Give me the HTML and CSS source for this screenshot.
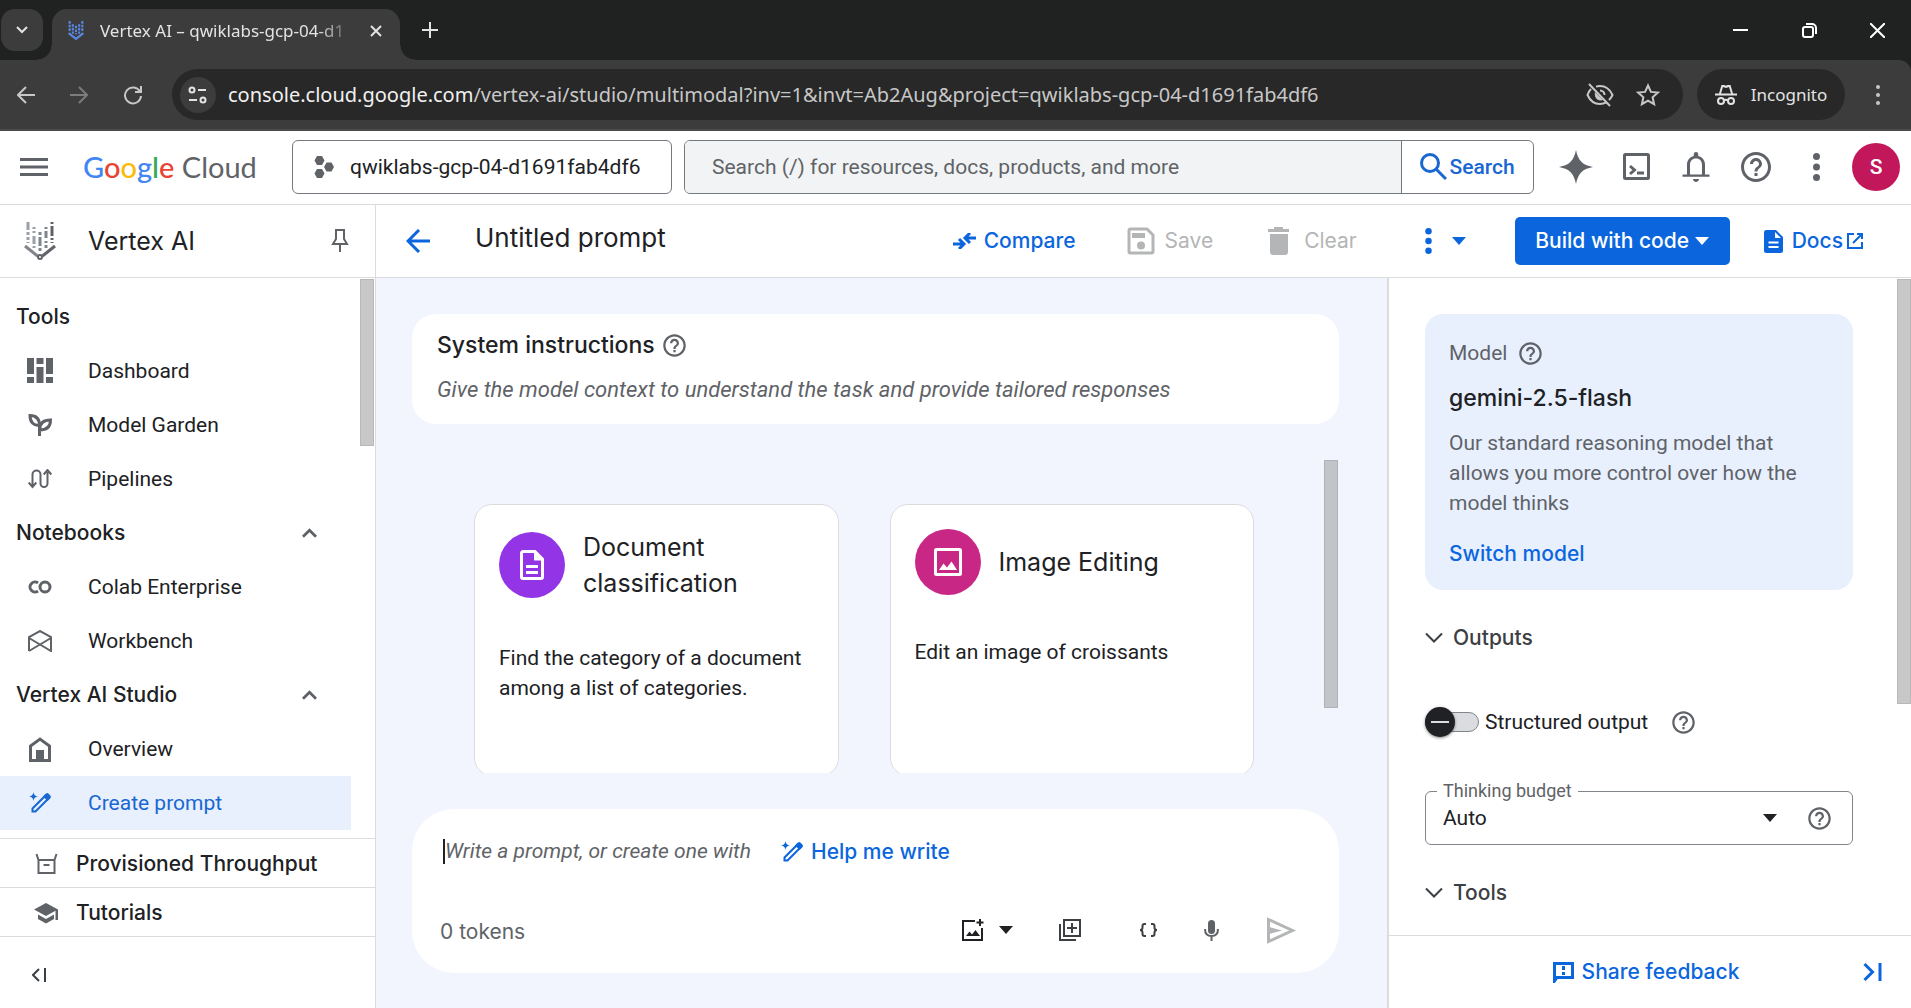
FILE: index.html
```html
<!DOCTYPE html>
<html lang="en">
<head>
<meta charset="utf-8">
<meta name="viewport" content="width=device-width, initial-scale=1">
<title>Vertex AI – qwiklabs-gcp-04-d1691fab4df6</title>
<link rel="stylesheet" href="styles.css">
</head>
<body>
<svg class="sprite" aria-hidden="true">
  <symbol id="i-help" viewBox="0 0 24 24"><path d="M11 18h2v-2h-2v2zm1-16C6.480 2 2 6.480 2 12s4.480 10 10 10 10-4.480 10-10S17.520 2 12 2zm0 18c-4.410 0-8-3.590-8-8s3.590-8 8-8 8 3.590 8 8-3.590 8-8 8zm0-14c-2.210 0-4 1.790-4 4h2c0-1.100.9-2 2-2s2 .9 2 2c0 2-3 1.750-3 5h2c0-2.250 3-2.500 3-5 0-2.210-1.790-4-4-4z"/></symbol>
  <symbol id="i-caret" viewBox="0 0 14 8"><path d="M0 0h14L7 8z"/></symbol>
  <symbol id="i-dots" viewBox="0 0 8 32"><circle cx="4" cy="4" r="4"/><circle cx="4" cy="16" r="4"/><circle cx="4" cy="28" r="4"/></symbol>
  <symbol id="i-wand" viewBox="0 0 22 22"><path d="M4.500 0c.5 2.800 1.300 3.800 4.500 4.500-3.200.7-4 1.700-4.500 4.500C4 6.200 3.200 5.200 0 4.500 3.200 3.800 4 2.800 4.500 0z"/><path fill="none" stroke="currentColor" stroke-width="2" d="M3.500 19.500v-3L16.500 3.500l3 3-13 13z"/><path d="M14 4.500L16.800 1.700a2 2 0 0 1 2.800 0l1.700 1.700a2 2 0 0 1 0 2.800L18.500 9z"/></symbol>
  <symbol id="i-up" viewBox="0 0 16 10"><path fill="none" stroke="currentColor" stroke-width="3" d="M1 9l7-7 7 7"/></symbol>
  <symbol id="i-down" viewBox="0 0 18 12"><path fill="none" stroke="currentColor" stroke-width="2" d="M1 1.500l8 8 8-8"/></symbol>
</svg>

<header class="browser">
  <div class="tabstrip">
    <button class="tab-search" aria-label="Search tabs"><svg width="12" height="8" viewBox="0 0 12 8"><path class="line" stroke-width="2" d="M1 1l5 5 5-5"/></svg></button>
    <div class="tab">
      <svg class="tab-icon" width="18" height="20" viewBox="0 0 32 38" fill="#5b86e0" stroke="#5b86e0"><path fill="none" stroke-width="4" d="M2 23l14 11 14-11"/><path fill="none" stroke-width="4" stroke-dasharray="5 2" d="M4 0v20M10 6v18M16 9v16M22 6v18M28 0v20"/></svg>
      <span class="tab-title">Vertex AI – qwiklabs-gcp-04-d1</span>
      <button class="tab-close" aria-label="Close tab"><svg width="12" height="12" viewBox="0 0 12 12"><path class="line" stroke-width="2" d="M1 1l10 10M11 1L1 11"/></svg></button>
    </div>
    <button class="tab-new" aria-label="New tab"><svg width="16" height="16" viewBox="0 0 16 16"><path class="line" stroke-width="2" d="M8 0v16M0 8h16"/></svg></button>
    <div class="window-buttons">
      <button aria-label="Minimize"><svg width="15" height="15" viewBox="0 0 15 15"><path class="line" stroke-width="2" d="M0 7h15"/></svg></button>
      <button aria-label="Restore"><svg width="15" height="15" viewBox="0 0 15 15"><path class="line" stroke-width="2" d="M4 1h6a4 4 0 0 1 4 4v6"/><rect class="line" stroke-width="2" x="1" y="4" width="10" height="10" rx="2"/></svg></button>
      <button aria-label="Close"><svg width="15" height="15" viewBox="0 0 15 15"><path class="line" stroke-width="2" d="M0 0l15 15M15 0L0 15"/></svg></button>
    </div>
  </div>
  <div class="toolbar">
    <button class="nav" aria-label="Back"><svg width="18" height="18" viewBox="0 0 18 18"><path class="line" stroke-width="2" d="M18 9H2M9 1L1 9l8 8"/></svg></button>
    <button class="nav nav-off" aria-label="Forward"><svg width="18" height="18" viewBox="0 0 18 18"><path class="line" stroke-width="2" d="M0 9h16M9 1l8 8-8 8"/></svg></button>
    <button class="nav" aria-label="Reload"><svg width="20" height="20" viewBox="0 0 20 20"><path class="line" stroke-width="2" d="M17 6.500A8 8 0 1 0 18 11M18 1v6h-6"/></svg></button>
    <div class="omnibox">
      <button class="site-info" aria-label="Site information"><svg width="20" height="20" viewBox="0 0 20 20"><g class="line" stroke-width="2"><circle cx="4" cy="5" r="2.500"/><path d="M10 5h8"/><circle cx="15" cy="15" r="2.500"/><path d="M1 15h8"/></g></svg></button>
      <span class="url"><b>console.cloud.google.com</b>/vertex-ai/studio/multimodal?inv=1&amp;invt=Ab2Aug&amp;project=qwiklabs-gcp-04-d1691fab4df6</span>
      <button class="omni-btn" aria-label="Third-party cookies blocked"><svg width="28" height="26" viewBox="0 0 28 26"><g class="line" stroke-width="2"><path d="M5 7C3 9 2 11 1.500 13 4 18.500 8.500 22 14 22c2.500 0 4.500-.6 6.500-1.600M10 4.600c1.200-.4 2.600-.6 4-.6 5.500 0 10 3.500 12.500 9-.8 1.800-2 3.500-3.500 5M3 2l21 22"/><path d="M14 8.500a4.500 4.500 0 0 1 4.500 4.500"/></g><path fill="currentColor" d="M9 10l8 8c-6 2-9-3-8-8z"/></svg></button>
      <button class="omni-btn" aria-label="Bookmark"><svg width="24" height="24" viewBox="0 0 24 24"><path class="line" stroke-width="2" d="M12 2.500l2.900 6.400 7 .7-5.300 4.700 1.500 6.900-6.100-3.600-6.100 3.600 1.500-6.900L2.100 9.600l7-.7z"/></svg></button>
    </div>
    <button class="incognito"><svg width="22" height="20" viewBox="0 0 22 20"><path fill="currentColor" d="M6.500 0h3l1.500.8L12.500 0h3L18 8.500h4v2H0v-2h4zM8 2L6 8.500h10L14 2l-3 1z"/><g class="line" stroke-width="2"><circle cx="6" cy="16" r="3"/><circle cx="16" cy="16" r="3"/><path d="M9 15.500c1.300-1 2.700-1 4 0"/></g></svg>Incognito</button>
    <button class="browser-menu" aria-label="Browser menu"><svg width="6" height="22" viewBox="0 0 6 22" fill="currentColor"><circle cx="3" cy="3" r="2"/><circle cx="3" cy="11" r="2"/><circle cx="3" cy="19" r="2"/></svg></button>
  </div>
</header>

<header class="cloud-bar">
  <button class="hamburger" aria-label="Navigation menu"><svg width="28" height="18" viewBox="0 0 28 18"><path fill="currentColor" d="M0 0h28v3H0zM0 7.500h28v3H0zM0 15h28v3H0z"/></svg></button>
  <a class="logo" href="#"><span class="g-blue">G</span><span class="g-red">o</span><span class="g-yellow">o</span><span class="g-blue">g</span><span class="g-green">l</span><span class="g-red">e</span> Cloud</a>
  <button class="project"><svg width="20" height="22" viewBox="0 0 20 22" fill="#5f6368"><path d="M3 0h5l2.500 4.500L8 9H3L.5 4.500zM3 13h5l2.500 4.500L8 22H3L.5 17.500zM12.500 6.500h5L20 11l-2.500 4.500h-5L10 11z"/></svg>qwiklabs-gcp-04-d1691fab4df6</button>
  <form class="search">
    <input type="text" aria-label="Search" placeholder="Search (/) for resources, docs, products, and more">
    <button type="button"><svg width="27" height="27" viewBox="0 0 27 27" fill="none" stroke="currentColor" stroke-width="3"><circle cx="10" cy="10" r="8.500"/><path d="M16 16l10 10"/></svg>Search</button>
  </form>
  <div class="cloud-actions">
    <button aria-label="Gemini"><svg width="34" height="34" viewBox="0 0 34 34" fill="currentColor"><path d="M17 0c2 10 6 15 17 17-11 2-15 7-17 17C15 24 11 19 0 17 11 15 15 10 17 0z"/></svg></button>
    <button aria-label="Cloud Shell"><svg width="27" height="27" viewBox="0 0 27 27"><rect class="line" stroke-width="3" x="1.500" y="1.500" width="24" height="24" rx="1"/><path class="line" stroke-width="3" d="M7 13l4.500 4L7 21M14 20h7"/></svg></button>
    <button aria-label="Notifications"><svg width="36" height="36" viewBox="0 0 24 24" fill="currentColor"><path d="M12 22c1.100 0 2-.9 2-2h-4c0 1.100.9 2 2 2zm6-5v-6.500c0-3-1.900-5.200-4.500-5.800V3.500a1.500 1.500 0 0 0-3 0v1.200C7.900 5.300 6 7.500 6 10.500V17H3v1.500h18V17h-3zm-2 0H8v-6.500c0-2.500 1.500-4.200 4-4.200s4 1.700 4 4.200V17z"/></svg></button>
    <button aria-label="Help"><svg class="icon" width="36" height="36"><use href="#i-help"/></svg></button>
    <button aria-label="More options"><svg class="icon" width="7" height="28"><use href="#i-dots"/></svg></button>
    <button class="avatar" aria-label="Account"><span>S</span></button>
  </div>
</header>

<div class="app">
  <aside class="sidebar">
    <div class="product">
      <svg width="32" height="38" viewBox="0 0 32 38" fill="none"><g stroke="#80868b" stroke-width="3"><path d="M1 24l12.500 10"/><path stroke="#5f6368" d="M31 24L18.500 34"/><circle cx="16" cy="35" r="2" stroke="#5f6368" stroke-width="2"/><path stroke="#9aa0a6" stroke-dasharray="8 2 3 2 3 2" d="M4 0v21"/><path stroke="#9aa0a6" stroke-dasharray="2 2 2 3 8 2" d="M10 5v21"/><path stroke="#80868b" stroke-dasharray="3 2 9 2" d="M16 10v20"/><path stroke-dasharray="2 2 7 3" d="M22 5v21"/><path stroke="#5f6368" stroke-dasharray="2 2 10 2" d="M28 0v21"/></g></svg>
      <h1>Vertex AI</h1>
      <button class="pin" aria-label="Pin navigation"><svg width="18" height="24" viewBox="0 0 18 24"><path class="line" stroke-width="2" d="M4 1h10M5 1v9l-3 5h14l-3-5V1M9 15v8"/></svg></button>
    </div>
    <nav class="menu">
      <h2>Tools</h2>
      <a href="#"><svg width="26" height="26" viewBox="0 0 26 26" fill="currentColor"><path d="M0 0h7v16H0zM0 19h7v6H0zM9.500 0h7v6h-7zM9.500 9h7v16h-7zM19 0h7v16h-7zM19 19h7v6h-7z"/></svg>Dashboard</a>
      <a href="#"><svg width="24" height="24" viewBox="0 0 24 24" fill="none" stroke="currentColor" stroke-width="3"><path d="M11.500 23V12.500M11.500 12.500C6 13 2 9.500 2 2.500c6 0 9.500 3.500 9.500 10zM11.500 17c0-6.500 4-10 11-10 0 7-4.500 10-11 10z"/></svg>Model Garden</a>
      <a href="#"><svg width="24" height="20" viewBox="0 0 24 20" fill="none" stroke="currentColor" stroke-width="2"><path d="M4.500 17V5.500a4 4 0 0 1 8 0v9a3.500 3.500 0 0 0 7 0V3M.7 13.500l3.800 4.500 3.800-4.500M15.700 5.500L19.500 1l3.800 4.500"/></svg>Pipelines</a>
      <h2>Notebooks<svg class="icon" width="15" height="10"><use href="#i-up"/></svg></h2>
      <a href="#"><svg width="24" height="14" viewBox="0 0 24 14" fill="none" stroke="currentColor" stroke-width="3"><path d="M10 3a5 5 0 1 0 0 8"/><circle cx="17" cy="7" r="5"/></svg>Colab Enterprise</a>
      <a href="#"><svg width="24" height="22" viewBox="0 0 24 22" fill="none" stroke="currentColor" stroke-width="2"><path d="M1 21V7l11-6 11 6v14L1 8M1 21L23 8"/></svg>Workbench</a>
      <h2>Vertex AI Studio<svg class="icon" width="15" height="10"><use href="#i-up"/></svg></h2>
      <a href="#"><svg width="22" height="25" viewBox="0 0 22 25" fill="none" stroke="currentColor" stroke-width="3"><path d="M1.500 23.500V9L11 2l9.500 7v14.500z"/><path fill="currentColor" stroke="none" d="M7 13h8v11H7z"/></svg>Overview</a>
      <a class="current" href="#" aria-current="page"><svg class="icon" width="22" height="22"><use href="#i-wand"/></svg>Create prompt</a>
      <div class="thumb thumb-menu"></div>
    </nav>
    <div class="pinned">
      <a href="#"><svg width="22" height="22" viewBox="0 0 22 22" fill="none" stroke="currentColor" stroke-width="2"><path d="M1 1l2 6h16l2-6M3 7v13h16V7M8 12h6"/></svg>Provisioned Throughput</a>
      <a href="#"><svg width="25" height="21" viewBox="0 0 25 21" fill="currentColor"><path d="M12 0L0 6.500 12 13l9.500-5.200V17H24V6.500zM4 11.500v4.500l8 4.500 8-4.500v-4.500L12 16z"/></svg>Tutorials</a>
    </div>
    <button class="collapse" aria-label="Collapse menu"><svg width="15" height="14" viewBox="0 0 15 14"><path class="line" stroke-width="2" d="M7 1L1 7l6 6M13 0v14"/></svg></button>
  </aside>

  <main class="studio">
    <div class="actions">
      <button class="back" aria-label="Back"><svg width="24" height="24" viewBox="0 0 24 24"><path class="line" stroke-width="3" d="M24 12H3M13 1L2 12l11 11"/></svg></button>
      <h2>Untitled prompt</h2>
      <button class="act act-compare"><svg width="23" height="16" viewBox="0 0 23 16"><path class="line" stroke-width="3" d="M0 11h10M6 6l5 5-5 5M23 5H12M17 0l-5 5 5 5"/></svg>Compare</button>
      <button class="act act-save" disabled><svg width="28" height="28" viewBox="0 0 28 28"><path class="line" stroke-width="3" d="M3.500 2H20l6 6v16.500a1.500 1.500 0 0 1-1.500 1.500h-21A1.500 1.500 0 0 1 2 24.500v-21A1.500 1.500 0 0 1 3.500 2z"/><path fill="currentColor" d="M5 6h13v5H5z"/><circle cx="14" cy="18.500" r="4" fill="currentColor"/></svg>Save</button>
      <button class="act act-clear" disabled><svg width="22" height="28" viewBox="0 0 22 28" fill="currentColor"><path d="M6 0h9v2h6v3H0V2h6zM2 7h18v18a3 3 0 0 1-3 3H5a3 3 0 0 1-3-3z"/></svg>Clear</button>
      <button class="act act-more" aria-label="More actions"><svg class="icon" width="7" height="26"><use href="#i-dots"/></svg><svg class="icon" width="14" height="8"><use href="#i-caret"/></svg></button>
      <button class="primary">Build with code<svg class="icon" width="14" height="8"><use href="#i-caret"/></svg></button>
      <a class="docs" href="#"><svg width="19" height="23" viewBox="0 0 19 23"><path fill="currentColor" d="M2.500 0H12l7 7v13.500a2.500 2.500 0 0 1-2.500 2.500h-14A2.500 2.500 0 0 1 0 20.500v-18A2.500 2.500 0 0 1 2.500 0z"/><path fill="#fff" d="M11 2v6h6zM4.500 11.500h10v2h-10zM4.500 16h10v2h-10z"/></svg>Docs<svg width="16" height="16" viewBox="0 0 16 16"><path class="line" stroke-width="2" d="M7 1H1v14h14V9M10 1h5v5M15 1L6 10"/></svg></a>
    </div>

    <div class="workspace">
      <section class="compose">
        <div class="system">
          <h3>System instructions<svg class="icon" width="27" height="27"><use href="#i-help"/></svg></h3>
          <input type="text" aria-label="System instructions" placeholder="Give the model context to understand the task and provide tailored responses">
        </div>
        <div class="samples">
          <article class="sample">
            <header><span class="badge purple"><svg width="24" height="30" viewBox="0 0 24 30"><path class="line" stroke-width="3" d="M3 1.500h12l7.500 7.500v18a1.500 1.500 0 0 1-1.500 1.500H3A1.500 1.500 0 0 1 1.500 27V3A1.500 1.500 0 0 1 3 1.500z"/><path fill="currentColor" d="M14 2h2l7 7v1.500h-9zM6 15h12v3H6zM6 21h12v3H6z"/></svg></span><h3>Document classification</h3></header>
            <p>Find the category of a document among a list of categories.</p>
          </article>
          <article class="sample">
            <header><span class="badge pink"><svg width="28" height="28" viewBox="0 0 28 28"><rect class="line" stroke-width="3" x="1.500" y="1.500" width="25" height="25" rx="1"/><path fill="currentColor" d="M5 22l4.500-6.500 3.500 4 4.500-6L23 22z"/></svg></span><h3>Image Editing</h3></header>
            <p>Edit an image of croissants</p>
          </article>
          <div class="thumb thumb-samples"></div>
        </div>
        <div class="prompt">
          <div class="prompt-line">
            <span class="cursor"></span><input type="text" aria-label="Prompt" placeholder="Write a prompt, or create one with">
            <button class="act help-write"><svg class="icon" width="22" height="22"><use href="#i-wand"/></svg>Help me write</button>
          </div>
          <div class="prompt-tools">
            <span class="tokens">0 tokens</span>
            <button class="media" aria-label="Insert media"><svg width="22" height="22" viewBox="0 0 22 22"><path class="line" stroke-width="2" d="M13 2H1v19h19V9"/><path fill="currentColor" d="M4 17l3.500-4.500 2.500 3 3.500-4.500L18 17z"/><path class="line" stroke-width="2" d="M18 0v7M14.500 3.500h7"/></svg><svg class="icon" width="14" height="8"><use href="#i-caret"/></svg></button>
            <button aria-label="Prompt gallery"><svg width="22" height="22" viewBox="0 0 22 22"><path class="line" stroke-width="2" d="M5 1h16v16H5zM1 5v16h16M13 4v10M8 9h10"/></svg></button>
            <button aria-label="Add variable"><svg width="19" height="14" viewBox="0 0 19 14"><path class="line" stroke-width="2" d="M7 1H5.500Q3.500 1 3.500 3v1.500Q3.500 7 1 7q2.500 0 2.500 2.500V11q0 2 2 2H7M12 1h1.500q2 0 2 2v1.500Q15.500 7 18 7q-2.500 0-2.500 2.500V11q0 2-2 2H12"/></svg></button>
            <button class="mic" aria-label="Voice input"><svg width="15" height="21" viewBox="0 0 15 21"><rect x="4" y="0" width="7" height="14" rx="3.500" fill="currentColor"/><path class="line" stroke-width="2" d="M1 9q0 7 6.500 7T14 9M7.500 16v5"/></svg></button>
            <button class="send" disabled aria-label="Submit"><svg width="29" height="27" viewBox="0 0 29 27"><path class="line" stroke-width="3" d="M1.500 2.500v22l24-11z"/><path fill="currentColor" d="M2 10l13 3.500L2 17z"/></svg></button>
          </div>
        </div>
      </section>

      <aside class="settings">
        <div class="settings-body">
          <section class="model">
            <p class="model-label">Model<svg class="icon" width="27" height="27"><use href="#i-help"/></svg></p>
            <h3>gemini-2.5-flash</h3>
            <p>Our standard reasoning model that allows you more control over how the model thinks</p>
            <button>Switch model</button>
          </section>
          <button class="group"><svg class="icon" width="18" height="12"><use href="#i-down"/></svg>Outputs</button>
          <div class="switch-row">
            <input type="checkbox" role="switch" id="structured"><label for="structured">Structured output</label>
            <svg class="icon" width="27" height="27"><use href="#i-help"/></svg>
          </div>
          <div class="field">
            <label for="budget">Thinking budget</label>
            <select id="budget"><option>Auto</option></select>
            <svg class="icon field-caret" width="14" height="8"><use href="#i-caret"/></svg>
            <svg class="icon" width="27" height="27"><use href="#i-help"/></svg>
          </div>
          <button class="group"><svg class="icon" width="18" height="12"><use href="#i-down"/></svg>Tools</button>
          <div class="thumb thumb-settings"></div>
        </div>
        <footer>
          <button class="act"><svg width="21" height="21" viewBox="0 0 21 21"><path class="line" stroke-width="3" d="M1.500 19V1.500h18v14H4z"/><path fill="currentColor" d="M9 4h3v4H9zM9 10h3v3H9z"/></svg>Share feedback</button>
          <button class="hide" aria-label="Hide panel"><svg width="19" height="18" viewBox="0 0 19 18"><path class="line" stroke-width="3" d="M1.500 1l8 8-8 8M17 0v18"/></svg></button>
        </footer>
      </aside>
    </div>
  </main>
</div>
</body>
</html>
```
FILE: styles.css
```css
:root {
  --text: #202124;
  --muted: #5f6368;
  --blue: #0b66de;
  --rule: #dadce0;
  --brand: "Inter", "Roboto", sans-serif;
  --ui: "Noto Sans", "Open Sans", sans-serif;
}
* { box-sizing: border-box; }
body {
  margin: 0;
  height: 100vh;
  display: flex;
  flex-direction: column;
  overflow: hidden;
  font: 21px/30px "Roboto", sans-serif;
  color: var(--text);
  background: #fff;
}
h1, h2, h3, p { margin: 0; font-weight: 400; }
a { color: inherit; text-decoration: none; }
button, input, select { font: inherit; color: inherit; border: 0; padding: 0; margin: 0; background: none; }
input:focus { outline: 0; }
button { display: flex; align-items: center; justify-content: center; cursor: pointer; white-space: nowrap; }
svg { flex: none; display: block; }
.icon { fill: currentColor; }
.line { fill: none; stroke: currentColor; }
.sprite { position: absolute; width: 0; height: 0; }

/* Browser window */
.browser { flex: none; background: #202221; color: #e3e3e3; font: 17px/24px var(--ui); }
.tabstrip { display: flex; align-items: flex-end; height: 60px; }
.tab-search { width: 42px; height: 42px; margin: 0 9px 9px 1px; border-radius: 14px; background: #3c3c3c; }
.tab {
  position: relative;
  display: flex;
  align-items: center;
  width: 348px;
  height: 51px;
  padding: 0 18px 8px 15px;
  border-radius: 15px 15px 0 0;
  background: #3c3c3c;
}
.tab::before, .tab::after {
  content: "";
  position: absolute;
  bottom: 0;
  width: 15px;
  height: 15px;
}
.tab::before { right: 100%; background: radial-gradient(circle at 0 0, transparent 14px, #3c3c3c 15px); }
.tab::after { left: 100%; background: radial-gradient(circle at 100% 0, transparent 14px, #3c3c3c 15px); }
.tab-title {
  flex: 1;
  margin: 0 12px 0 15px;
  white-space: nowrap;
  -webkit-mask-image: linear-gradient(90deg, #000 84%, transparent 99%);
  mask-image: linear-gradient(90deg, #000 84%, transparent 99%);
}
.tab-new { width: 60px; height: 60px; }
.window-buttons { display: flex; margin-left: auto; color: #fff; }
.window-buttons button { width: 69px; height: 60px; }
.window-buttons button:last-child { width: 67px; }
.toolbar {
  display: flex;
  align-items: center;
  height: 71px;
  border-bottom: 2px solid #4a4a4a;
  border-radius: 0 12px 0 0;
  background: #3c3c3c;
}
.nav { width: 54px; height: 54px; color: #c7c7c7; }
.nav:first-child { width: 52px; }
.nav-off { color: #7c7c7c; }
.omnibox {
  flex: 1;
  display: flex;
  align-items: center;
  height: 51px;
  margin: 0 14px 0 12px;
  padding: 0 11px 0 8px;
  border-radius: 26px;
  background: #282828;
}
.site-info { width: 36px; height: 36px; border-radius: 18px; background: #3c3c3c; }
.url { flex: 1; margin-left: 12px; font-size: 20px; white-space: nowrap; color: #c7c7c7; }
.url b { font-weight: 400; color: #f1f1f1; }
.omni-btn { width: 48px; height: 48px; color: #c7c7c7; }
.incognito { gap: 14px; width: 148px; height: 51px; border-radius: 26px; background: #282828; }
.browser-menu { width: 66px; height: 51px; color: #c7c7c7; }

/* Google Cloud bar */
.cloud-bar {
  flex: none;
  display: flex;
  align-items: center;
  height: 74px;
  padding: 0 5px 2px 20px;
  border-bottom: 1px solid var(--rule);
}
.cloud-bar > * { flex: none; }
.hamburger { color: var(--muted); }
.logo { width: 208px; padding-left: 35px; font: 29px/36px "Lato", sans-serif; color: var(--muted); white-space: nowrap; }
.logo span { font-weight: 500; }
.g-blue { color: #4285f4; }
.g-red { color: #ea4335; }
.g-yellow { color: #fbbc05; }
.g-green { color: #34a853; }
.project { justify-content: flex-start; gap: 16px; width: 380px; height: 54px; margin-left: 36px; padding-left: 21px; border: 1px solid #747980; border-radius: 6px; }
.cloud-bar .search {
  flex: 1;
  display: flex;
  height: 54px;
  margin-left: 12px;
  border: 1px solid #747980;
  border-radius: 6px;
  overflow: hidden;
}
.search input { flex: 1; min-width: 0; padding-left: 27px; background: #f1f3f4; }
.search input::placeholder { color: var(--muted); opacity: 1; }
.search button { width: 132px; gap: 2px; border-left: 1px solid #747980; font-weight: 500; color: #1967d2; }
.cloud-actions { display: flex; margin-left: 12px; color: var(--muted); }
.cloud-actions button { width: 60px; height: 60px; }
.avatar span { width: 48px; border-radius: 24px; background: #c2185b; color: #fff; font-weight: 500; line-height: 48px; }

.app { flex: 1; min-height: 0; display: flex; }

/* Sidebar */
.sidebar { flex: none; display: flex; flex-direction: column; width: 376px; border-right: 1px solid var(--rule); }
.product { flex: none; display: flex; align-items: center; height: 73px; padding: 0 26px 0 24px; border-bottom: 1px solid var(--rule); }
.product h1 { flex: 1; margin-left: 32px; font: 25px/36px var(--brand); }
.pin { width: 18px; color: var(--muted); }
.menu { position: relative; flex: 1; min-height: 0; padding-top: 12px; overflow: hidden; }
.menu h2, .menu a { display: flex; align-items: center; height: 54px; }
.menu h2 { justify-content: space-between; padding: 0 58px 0 16px; font: 500 21px/30px var(--brand); }
.menu h2 svg { color: var(--muted); }
.menu a { width: 351px; }
.menu a svg { width: 26px; margin: 0 35px 0 27px; color: var(--muted); }
.menu a.current { background: #e8f0fe; color: #1967d2; }
.menu a.current svg { color: #1967d2; }
.thumb { position: absolute; width: 14px; background: #c8c8c8; border: 1px solid #b8b8b8; }
.thumb-menu { right: 1px; top: 1px; height: 167px; }
.pinned { flex: none; border-top: 1px solid var(--rule); }
.pinned a { display: flex; align-items: center; height: 49px; padding-top: 2px; border-bottom: 1px solid var(--rule); font: 500 21px/30px var(--brand); }
.pinned svg { width: 25px; margin: 0 17px 0 34px; color: var(--muted); }
.collapse { flex: none; width: 78px; height: 71px; padding-top: 4px; color: #3c4043; }

/* Studio */
.studio { flex: 1; min-width: 0; display: flex; flex-direction: column; }
.actions { flex: none; display: flex; align-items: center; height: 73px; padding: 0 48px 0 30px; border-bottom: 1px solid var(--rule); color: var(--blue); font: 500 21px/30px var(--brand); }
.actions h2 { flex: 1; margin-left: 45px; padding-bottom: 6px; font: 26px/36px var(--brand); color: var(--text); white-space: nowrap; }
.act { gap: 8px; font-family: var(--brand); font-weight: 500; color: var(--blue); }
.act:disabled { color: #b4b5b6; font-weight: 400; cursor: default; }
.act-compare { margin-right: 51px; }
.act-save { gap: 10px; margin-right: 55px; }
.act-clear { gap: 14px; margin-right: 68px; }
.act-more { gap: 20px; margin-right: 49px; }
.primary { gap: 6px; width: 215px; height: 48px; border-radius: 5px; background: var(--blue); color: #fff; }
.docs { display: flex; align-items: center; gap: 9px; margin-left: 34px; }
.docs svg:last-child { margin-left: -5px; }
.workspace { flex: 1; min-height: 0; display: flex; }

.compose { flex: 1; min-width: 0; display: flex; flex-direction: column; padding: 36px 48px 35px 36px; background: #f2f5fe; }
.system { flex: none; height: 110px; padding: 15px 25px; border-radius: 24px; background: #fff; }
.system h3 { display: flex; align-items: center; gap: 6px; font: 500 23px/32px var(--brand); }
.system h3 svg { color: var(--muted); }
.system input { display: block; width: 100%; height: 30px; margin-top: 14px; font-size: 22px; font-style: italic; }
.system input::placeholder, .prompt input::placeholder { color: var(--muted); opacity: 1; }
.samples { position: relative; flex: 1; min-height: 0; display: grid; grid-template-columns: 1fr 1fr; align-content: start; gap: 51px; margin: 36px 0; padding: 44px 85px 0 62px; overflow: hidden; }
.sample { height: 272px; padding: 24px 60px 23px 24px; border: 1px solid var(--rule); border-radius: 18px; background: #fff; }
.sample:first-child { padding-right: 24px; }
.sample header { display: flex; align-items: center; gap: 18px; margin-bottom: 42px; }
.sample h3 { font: 25px/36px var(--brand); }
.badge { flex: none; display: flex; align-items: center; justify-content: center; width: 66px; height: 66px; border-radius: 33px; color: #fff; }
.purple { background: #9334e6; }
.pink { background: #c92786; }
.thumb-samples { right: 1px; top: 0; height: 248px; background: #c1c4c9; border-color: #b0b4b8; }
.prompt { flex: none; padding: 26px 28px 19px; border-radius: 42px; background: #fff; }
.prompt-line { display: flex; align-items: center; height: 32px; padding-left: 3px; }
.cursor { width: 2px; height: 25px; background: var(--text); }
.prompt-line input { width: 325px; height: 30px; font-style: italic; }
.help-write { margin-left: 11px; padding-top: 2px; }
.prompt-tools { display: flex; align-items: center; height: 48px; margin-top: 39px; color: #3c4043; }
.tokens { margin-right: auto; padding-top: 4px; font: 400 21px/30px var(--brand); color: var(--muted); }
.media { gap: 15px; color: var(--text); margin-right: 46px; }
.media + button { margin-right: 58px; }
.mic { margin: 0 48px 0 46px; color: var(--muted); }
.send { margin-right: 15px; color: #b4b5b6; }

/* Settings panel */
.settings { flex: none; display: flex; flex-direction: column; width: 524px; border-left: 2px solid var(--rule); }
.settings-body { position: relative; flex: 1; min-height: 0; padding: 36px 58px 0 36px; overflow: hidden; }
.model { padding: 24px 24px 21px; border-radius: 18px; background: #e8f0fe; color: var(--muted); }
.model-label { display: flex; align-items: center; gap: 10px; }
.model h3 { margin: 14px 0; font: 500 23px/32px var(--brand); color: var(--text); }
.model button { margin-top: 21px; font: 500 21px/30px var(--brand); color: var(--blue); }
.group { gap: 10px; height: 36px; font: 500 21px/30px var(--brand); color: #3c4043; }
.model + .group { margin-top: 30px; }
.switch-row { display: flex; align-items: center; height: 36px; margin-top: 48px; }
.switch-row > svg { margin-left: 22px; color: var(--muted); }
.switch-row input { appearance: none; display: flex; align-items: center; width: 54px; height: 20px; margin-right: 6px; border: 1px solid #80868b; border-radius: 10px; background: var(--rule); }
.switch-row input::before {
  content: "";
  width: 30px;
  height: 30px;
  margin-left: -1px;
  border-radius: 15px;
  background: linear-gradient(#dadce0, #dadce0) center / 18px 2px no-repeat var(--text);
  box-shadow: 0 1px 3px rgba(0, 0, 0, .5);
}
.field { position: relative; display: flex; align-items: center; height: 54px; margin: 51px 0 30px; padding-right: 19px; border: 1px solid #80868b; border-radius: 6px; }
.field label { position: absolute; left: 11px; top: -16px; padding: 0 6px; background: #fff; font-size: 18px; color: var(--muted); }
.field select { flex: 1; align-self: stretch; padding-left: 17px; appearance: none; }
.field-caret { margin-right: 29px; }
.field .icon:last-child { color: var(--muted); }
.thumb-settings { right: 0; top: 1px; height: 425px; }
.settings footer { flex: none; display: flex; align-items: center; height: 73px; padding-right: 29px; border-top: 1px solid var(--rule); color: var(--blue); }
.settings footer .act { margin: 0 auto; padding-left: 40px; }
```
